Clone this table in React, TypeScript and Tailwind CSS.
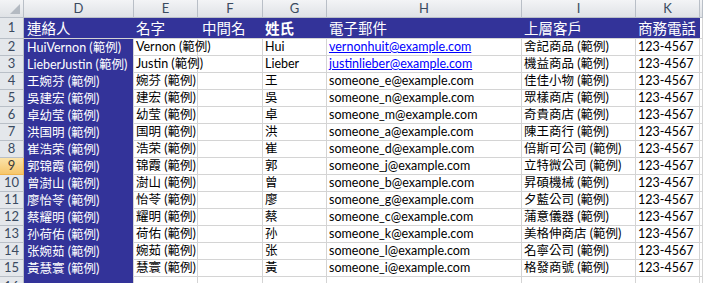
import React from "react";

const LAT = "font-['Lato','Noto_Sans_CJK_TC',sans-serif]";

function Txt({ s, cjk }: { s: string; cjk: string }) {
  const parts = s.split(/([\u3400-\u9fff]+)/);
  return (
    <span>
      {parts.map((p, i) =>
        /[\u3400-\u9fff]/.test(p) ? (
          <span key={i} className={`${cjk} font-['Noto_Sans_CJK_TC',sans-serif]`}>
            {p}
          </span>
        ) : (
          <React.Fragment key={i}>{p}</React.Fragment>
        )
      )}
    </span>
  );
}

type Row = [string, string, string, string, string, string];

const rows: Row[] = [
  ["HuiVernon (範例)", "Vernon (範例)", "Hui", "vernonhuit@example.com", "舍記商品 (範例)", "123-4567"],
  ["LieberJustin (範例)", "Justin (範例)", "Lieber", "justinlieber@example.com", "機益商品 (範例)", "123-4567"],
  ["王婉芬 (範例)", "婉芬 (範例)", "王", "someone_e@example.com", "佳佳小物 (範例)", "123-4567"],
  ["吳建宏 (範例)", "建宏 (範例)", "吳", "someone_n@example.com", "眾樣商店 (範例)", "123-4567"],
  ["卓幼莹 (範例)", "幼莹 (範例)", "卓", "someone_m@example.com", "奇貴商店 (範例)", "123-4567"],
  ["洪国明 (範例)", "国明 (範例)", "洪", "someone_a@example.com", "陳王商行 (範例)", "123-4567"],
  ["崔浩荣 (範例)", "浩荣 (範例)", "崔", "someone_d@example.com", "倍斯可公司 (範例)", "123-4567"],
  ["郭锦霞 (範例)", "锦霞 (範例)", "郭", "someone_j@example.com", "立特微公司 (範例)", "123-4567"],
  ["曾澍山 (範例)", "澍山 (範例)", "曾", "someone_b@example.com", "昇碩機械 (範例)", "123-4567"],
  ["廖怡苓 (範例)", "怡苓 (範例)", "廖", "someone_g@example.com", "夕藍公司 (範例)", "123-4567"],
  ["蔡耀明 (範例)", "耀明 (範例)", "蔡", "someone_c@example.com", "蒲意儀器 (範例)", "123-4567"],
  ["孙荷佑 (範例)", "荷佑 (範例)", "孙", "someone_k@example.com", "美格伸商店 (範例)", "123-4567"],
  ["张婉茹 (範例)", "婉茹 (範例)", "张", "someone_l@example.com", "名寧公司 (範例)", "123-4567"],
  ["黃慧寰 (範例)", "慧寰 (範例)", "黃", "someone_i@example.com", "格發商號 (範例)", "123-4567"],
];

const BODY_CJK = "text-[12.5px]";
const HEAD_CJK = "text-[14.5px]";

const cell = "border-r border-b border-[#d4d4d4] flex items-center whitespace-nowrap overflow-visible";
const rowHead = "border-r border-b border-[#b9bfc7] bg-[#e4e7eb] text-[#3a4a60] text-[13px] flex items-center justify-center";
const colHead = "border-r border-b border-[#b9bfc7] bg-gradient-to-b from-[#f3f4f6] to-[#dfe2e6] text-[#3a4a60] text-[13px] flex items-center justify-center";

export default function App() {
  return (
    <div className={`w-[703px] h-[283px] overflow-hidden bg-white ${LAT} text-[12.5px] text-black`}>
      <div className="grid grid-cols-[24px_110px_64px_65px_64px_195px_114px_64px_1fr] grid-rows-[18px_21px_repeat(15,17px)]">
        {/* column headers */}
        <div className={`${colHead} relative`}>
          <div className="absolute right-[3px] bottom-[3px] w-0 h-0 border-l-[10px] border-l-transparent border-b-[10px] border-b-[#b4bac2]" />
        </div>
        {["D", "E", "F", "G", "H", "I", "K", ""].map((c, i) => (
          <div key={i} className={colHead}>
            {c}
          </div>
        ))}

        {/* row 1 */}
        <div className={rowHead}>1</div>
        {[
          ["連絡人", false],
          ["名字", false],
          ["中間名", false],
          ["姓氏", true],
          ["電子郵件", false],
          ["上層客戶", false],
          ["商務電話", false],
        ].map(([t, b], i) => (
          <div
            key={i}
            className={`border-b border-[#d4d4d4] bg-[#333399] text-white flex items-center whitespace-nowrap overflow-visible ${
              i === 0 ? "pl-[3px]" : i === 2 ? "pl-[4px]" : "pl-[2px]"
            } ${b ? "font-bold" : ""}`}
          >
            <Txt s={t as string} cjk={HEAD_CJK} />
          </div>
        ))}
        <div className={cell} />

        {rows.map((r, idx) => {
          const n = idx + 2;
          const sel = n === 9;
          return (
            <React.Fragment key={n}>
              <div
                className={
                  sel
                    ? "border-r border-b border-[#f0b44c] bg-gradient-to-b from-[#fbe3a9] to-[#f6c66a] text-[#3a3a3a] text-[13px] flex items-center justify-center"
                    : rowHead
                }
              >
                {n}
              </div>
              <div className="bg-[#333399] text-white border-r border-[#d4d4d4] flex items-center pl-[3px] whitespace-nowrap">
                <Txt s={r[0]} cjk={BODY_CJK} />
              </div>
              <div className={`${cell} pl-[2px]`}>
                <Txt s={r[1]} cjk={BODY_CJK} />
              </div>
              <div className={cell} />
              <div className={`${cell} pl-[2px]`}>
                <Txt s={r[2]} cjk={BODY_CJK} />
              </div>
              <div className={`${cell} pl-[2px]`}>
                {n <= 3 ? (
                  <span className="text-[#0000ff] underline">{r[3]}</span>
                ) : (
                  <span>{r[3]}</span>
                )}
              </div>
              <div className={`${cell} pl-[2px]`}>
                <Txt s={r[4]} cjk={BODY_CJK} />
              </div>
              <div className={`${cell} pl-[2px]`}>
                <span>{r[5]}</span>
              </div>
              <div className={cell} />
            </React.Fragment>
          );
        })}

        {/* row 16 partial */}
        <div className={`${rowHead} items-start`}>16</div>
        <div className="bg-[#333399] border-r border-[#d4d4d4]" />
        {[0, 1, 2, 3, 4, 5, 6].map((i) => (
          <div key={i} className={cell} />
        ))}
      </div>
    </div>
  );
}
